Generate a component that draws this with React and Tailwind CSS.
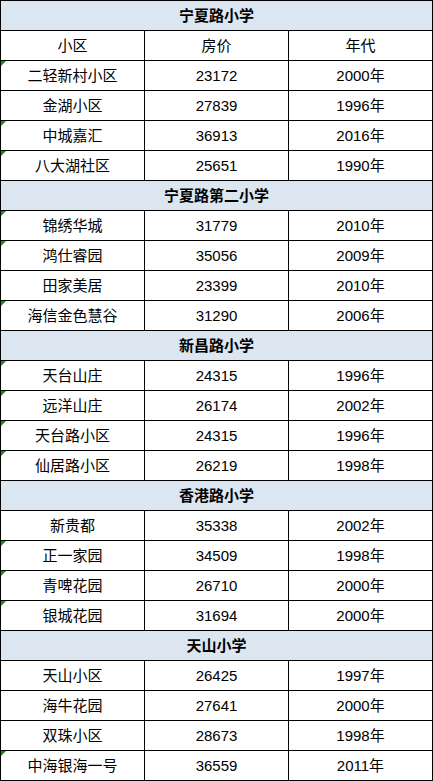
import React from "react";

const groups = [
  {
    name: "宁夏路小学",
    sub: true,
    rows: [
      ["二轻新村小区", "23172", "2000年", true],
      ["金湖小区", "27839", "1996年", false],
      ["中城嘉汇", "36913", "2016年", true],
      ["八大湖社区", "25651", "1990年", true],
    ],
  },
  {
    name: "宁夏路第二小学",
    rows: [
      ["锦绣华城", "31779", "2010年", true],
      ["鸿仕睿园", "35056", "2009年", true],
      ["田家美居", "23399", "2010年", false],
      ["海信金色慧谷", "31290", "2006年", true],
    ],
  },
  {
    name: "新昌路小学",
    rows: [
      ["天台山庄", "24315", "1996年", true],
      ["远洋山庄", "26174", "2002年", true],
      ["天台路小区", "24315", "1996年", true],
      ["仙居路小区", "26219", "1998年", true],
    ],
  },
  {
    name: "香港路小学",
    rows: [
      ["新贵都", "35338", "2002年", false],
      ["正一家园", "34509", "1998年", true],
      ["青啤花园", "26710", "2000年", true],
      ["银城花园", "31694", "2000年", true],
    ],
  },
  {
    name: "天山小学",
    rows: [
      ["天山小区", "26425", "1997年", false],
      ["海牛花园", "27641", "2000年", false],
      ["双珠小区", "28673", "1998年", false],
      ["中海银海一号", "36559", "2011年", true],
    ],
  },
];

const font = {
  fontFamily: '"Liberation Sans", "Noto Sans CJK SC", sans-serif',
};

function Cell({ children, mark }) {
  return (
    <div className="relative w-[144px] h-[30px] border-r border-b border-black flex items-center justify-center pt-[2px] text-[15px] text-black">
      {mark && (
        <span className="absolute top-0 left-0 w-0 h-0 border-t-[5px] border-r-[5px] border-t-[#1a8a1a] border-r-transparent" />
      )}
      {children}
    </div>
  );
}

export default function App() {
  return (
    <div className="w-[433px] bg-white border-l border-t border-black" style={font}>
      {groups.map((g) => (
        <React.Fragment key={g.name}>
          <div className="w-[432px] h-[30px] border-r border-b border-black bg-[#dce6f1] flex items-center justify-center pt-[2px] text-[15px] font-bold text-black">
            {g.name}
          </div>
          {g.sub && (
            <div className="flex">
              <Cell>小区</Cell>
              <Cell>房价</Cell>
              <Cell>年代</Cell>
            </div>
          )}
          {g.rows.map((r) => (
            <div className="flex" key={r[0]}>
              <Cell mark={r[3]}>{r[0]}</Cell>
              <Cell>{r[1]}</Cell>
              <Cell>{r[2]}</Cell>
            </div>
          ))}
        </React.Fragment>
      ))}
    </div>
  );
}
